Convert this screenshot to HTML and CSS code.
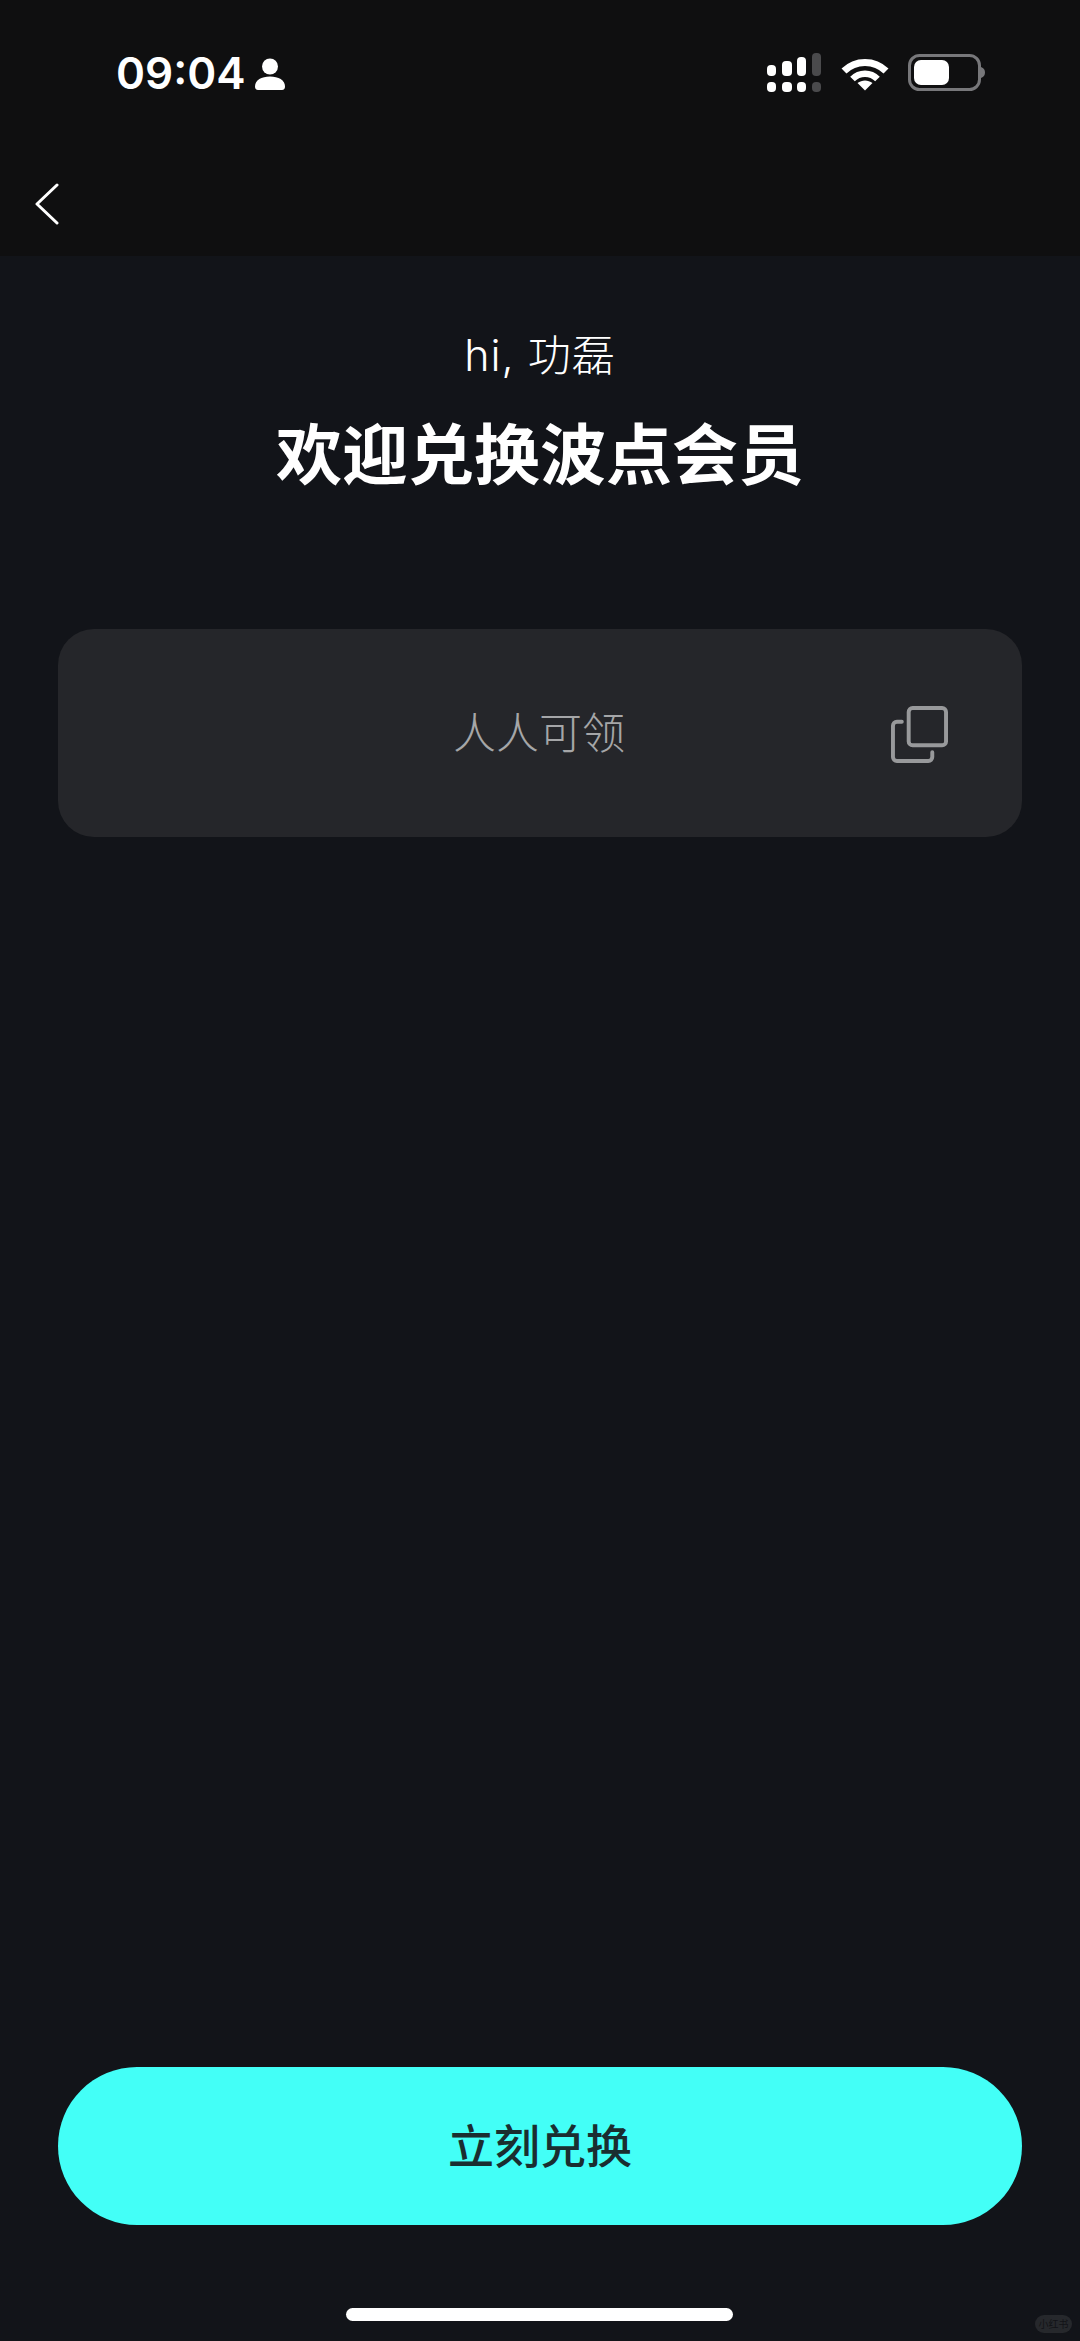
FILE: index.html
```html
<!DOCTYPE html>
<html lang="zh-CN">
<head>
  <meta charset="UTF-8" />
  <meta name="viewport" content="width=device-width, initial-scale=1" />
  <title>兑换会员</title>
  <link rel="stylesheet" href="styles.css">
</head>
<body>

<div class="page">
  <header class="top">
    <div class="status-bar">
      <div class="status-left">
        <span class="time">09:04</span>
        <svg class="person" width="30" height="32" viewBox="0 0 30 32">
          <circle cx="15" cy="8.5" r="8" fill="#fff"/>
          <path d="M0 28.5C0 22 6.5 18.5 15 18.5S30 22 30 28.5C30 30.5 29 32 27 32H3C1 32 0 30.5 0 28.5Z" fill="#fff"/>
        </svg>
      </div>
      <div class="status-right">
        <svg class="signal" width="54" height="39" viewBox="0 0 54 39">
          <rect x="0" y="12" width="9" height="11" rx="4" fill="#fff"/>
          <rect x="15" y="8" width="10" height="15" rx="4" fill="#fff"/>
          <rect x="30" y="4" width="9" height="19" rx="4" fill="#fff"/>
          <rect x="45" y="0" width="9" height="23" rx="4" fill="#4a4a4c"/>
          <rect x="0" y="29" width="9" height="10" rx="4" fill="#fff"/>
          <rect x="15" y="29" width="10" height="10" rx="4" fill="#fff"/>
          <rect x="30" y="29" width="9" height="10" rx="4" fill="#fff"/>
          <rect x="45" y="29" width="9" height="10" rx="4" fill="#4a4a4c"/>
        </svg>
        <svg class="wifi" width="48" height="34" viewBox="0 0 48 34">
          <path d="M3 14C14.5 2.5 33.5 2.5 45 14" fill="none" stroke="#fff" stroke-width="7"/>
          <path d="M11.5 22C18.5 15 29.5 15 36.5 22" fill="none" stroke="#fff" stroke-width="6.5"/>
          <path d="M16.5 26C21 22.5 27 22.5 31.5 26L24 33.5Z" fill="#fff"/>
        </svg>
        <svg class="battery" width="77" height="37" viewBox="0 0 77 37">
          <rect x="1.5" y="1.5" width="70" height="34" rx="10" fill="none" stroke="#77777a" stroke-width="3"/>
          <rect x="6" y="6" width="35" height="25" rx="7" fill="#fff"/>
          <path d="M73 13C76 14 77 16 77 18.5S76 23 73 24Z" fill="#77777a"/>
        </svg>
      </div>
    </div>
    <div class="nav-bar">
      <svg class="back" width="24" height="42" viewBox="0 0 24 42">
        <path d="M22 2L2 21L22 40" fill="none" stroke="#fff" stroke-width="3" stroke-linecap="round" stroke-linejoin="round"/>
      </svg>
    </div>
  </header>

  <main class="content">
    <p class="greeting">hi, 功磊</p>
    <h1 class="title">欢迎兑换波点会员</h1>

    <div class="code-box">
      <span class="code-text">人人可领</span>
      <svg class="copy-icon" width="57" height="57" viewBox="0 0 58 58">
        <rect x="18" y="2" width="38" height="38" rx="4" fill="none" stroke="#98999b" stroke-width="4"/>
        <path d="M11 16H6C3.8 16 2 17.8 2 20V52C2 54.2 3.8 56 6 56H38C40.2 56 42 54.2 42 52V47" fill="none" stroke="#98999b" stroke-width="4" stroke-linecap="round"/>
      </svg>
    </div>

    <button class="redeem-btn">立刻兑换</button>
  </main>

  <div class="home-bar"></div>
  <div class="watermark">小红书</div>
</div>

</body>
</html>
```

FILE: styles.css
```css
* { box-sizing: border-box; }
body {
  margin: 0;
  background: #121419;
  font-family: Inter, "Noto Sans CJK SC", sans-serif;
  color: #fff;
}

.page {
  position: relative;
  width: 1080px;
  height: 2341px;
  display: flex;
  flex-direction: column;
  overflow: hidden;
}

.top {
  height: 256px;
  background: #0f0f10;
}

.status-bar {
  height: 146px;
  padding: 53px 95px 0 116px;
  display: flex;
  justify-content: space-between;
  align-items: flex-start;
}

.status-left {
  display: flex;
  align-items: center;
  gap: 9px;
  height: 40px;
}

.time {
  font-size: 44px;
  font-weight: 600;
  line-height: 40px;
}

.person {
  margin-top: 1px;
}

.status-right {
  display: flex;
  align-items: flex-start;
  gap: 20px;
}

.wifi {
  margin-top: 4px;
}

.battery {
  margin-top: 1px;
  margin-left: -1px;
}

.nav-bar {
  padding: 37px 0 0 35px;
}

.back {
  display: block;
}

.content {
  flex-grow: 1;
  display: flex;
  flex-direction: column;
  align-items: center;
  padding: 0 58px;
}

.greeting {
  margin: 73px 0 0;
  height: 52px;
  font-size: 43px;
  line-height: 52px;
  font-weight: 300;
  letter-spacing: 1px;
}

.title {
  margin: 29px 0 0;
  height: 90px;
  font-size: 66px;
  line-height: 90px;
  font-weight: 700;
  white-space: nowrap;
}

.code-box {
  position: relative;
  width: 100%;
  height: 208px;
  margin-top: 129px;
  padding: 0 2px 6px 0;
  background: #25262a;
  border-radius: 36px;
  display: flex;
  align-items: center;
  justify-content: center;
}

.code-text {
  font-size: 43px;
  font-weight: 300;
  color: #a5a6a8;
}

.copy-icon {
  position: absolute;
  right: 74px;
  top: 77px;
}

.redeem-btn {
  width: 100%;
  height: 158px;
  margin-top: auto;
  margin-bottom: 116px;
  padding: 0 0 6px;
  border: none;
  border-radius: 79px;
  background: #43fff7;
  color: #1a2e30;
  font-family: inherit;
  font-size: 46px;
  font-weight: 500;
}

.home-bar {
  position: absolute;
  left: 346px;
  top: 2308px;
  width: 387px;
  height: 13px;
  border-radius: 7px;
  background: #fff;
}

.watermark {
  position: absolute;
  left: 1035px;
  top: 2315px;
  width: 37px;
  height: 18px;
  border-radius: 9px;
  background: #26282c;
  color: #121317;
  font-size: 10px;
  line-height: 18px;
  text-align: center;
}
```
